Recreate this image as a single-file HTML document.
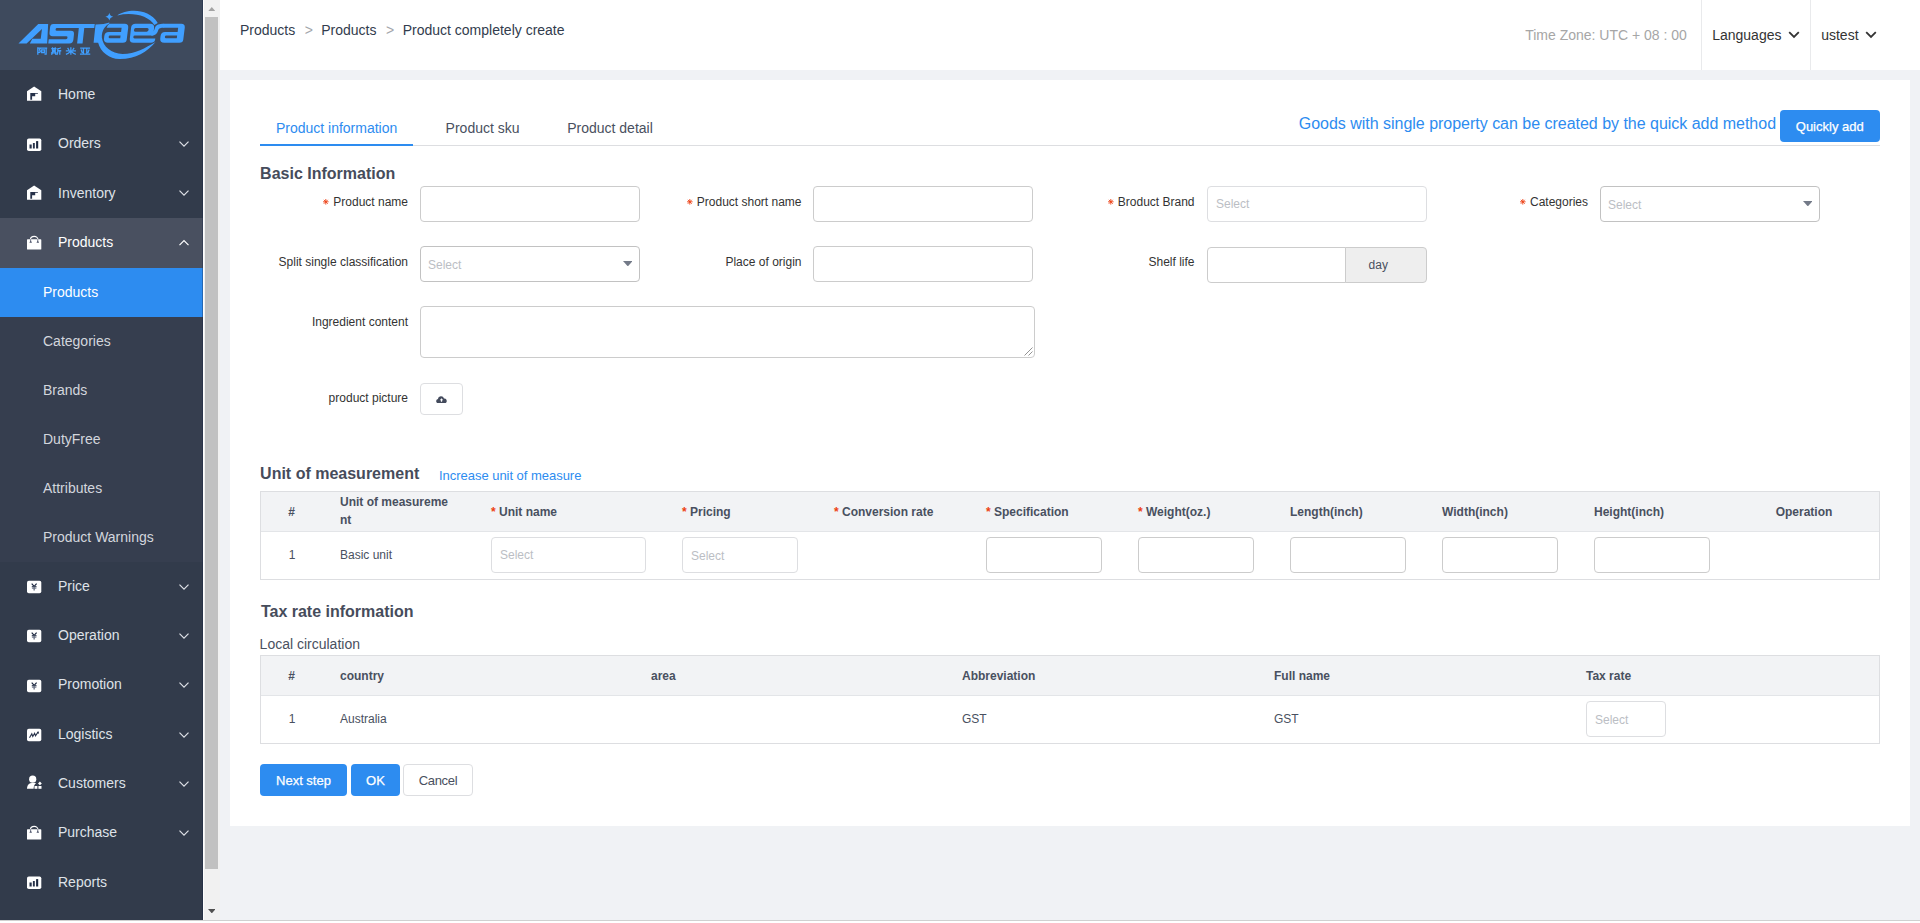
<!DOCTYPE html>
<html>
<head>
<meta charset="utf-8">
<title>Product completely create</title>
<style>
*{box-sizing:border-box;}
html,body{margin:0;padding:0;}
body{width:1920px;height:923px;overflow:hidden;background:#fff;font-family:"Liberation Sans",sans-serif;font-size:12px;color:#495060;position:relative;}
.abs{position:absolute;}
/* ---------- sidebar ---------- */
#side{position:absolute;left:0;top:0;width:203px;height:920px;background:#323b4b;overflow:hidden;}
#logo{position:absolute;left:0;top:0;width:203px;height:70px;background:#3e4a5d;}
.mi{position:absolute;left:0;width:203px;height:49.333px;color:#dfe2e8;font-size:14px;line-height:49.333px;white-space:nowrap;}
.mi .t{position:absolute;left:58px;top:0;}
.mi svg.ic{position:absolute;left:26.8px;top:16px;width:16px;height:18px;overflow:visible;}
.mi svg.ar{position:absolute;left:177.8px;top:20.8px;width:12px;height:8px;overflow:visible;}
.sub{position:absolute;left:0;width:203px;height:49.25px;background:#363e4f;color:#d3d6dd;font-size:14px;line-height:49.25px;}
.sub .t{position:absolute;left:43px;top:0;}
.sub.on{background:#2d8cf0;color:#fff;}
/* ---------- scrollbar ---------- */
#sb{position:absolute;left:203px;top:0;width:17px;height:920px;background:#f1f1f1;border-left:1px solid #fdfdfd;}
#sb .th{position:absolute;left:1px;top:17px;width:13px;height:851.7px;background:#c1c1c1;}
/* ---------- main ---------- */
#main{position:absolute;left:220px;top:0;width:1700px;height:920px;background:#f0f2f5;}
#hdr{position:absolute;left:0;top:0;width:1700px;height:70px;background:#fff;}
#card{position:absolute;left:10px;top:80px;width:1680px;height:746px;background:#fff;}
.tx{position:absolute;white-space:nowrap;line-height:20px;}
.lbl{position:absolute;white-space:nowrap;font-size:12px;line-height:20px;color:#333;}
.lbl svg.ast{display:inline-block;width:5.6px;height:5.6px;margin-right:4.6px;vertical-align:0.8px;overflow:visible;}
.ph{position:absolute;left:7px;top:0;line-height:34px;font-size:12px;color:#bbbec4;}
#ov{position:absolute;left:0;top:0;width:1920px;height:923px;}
.inp{position:absolute;height:36px;border:1px solid #ccc;border-radius:4px;background:#fff;}
.sel{position:absolute;height:36px;border:1px solid #dddee1;border-radius:4px;background:#fff;}
.sel span{position:absolute;left:8px;top:0;line-height:34px;font-size:12px;color:#bbbec4;}
.tri{position:absolute;width:0;height:0;border-left:4.75px solid transparent;border-right:4.75px solid transparent;border-top:5.5px solid #6b7280;}
.h2{position:absolute;font-size:16px;font-weight:bold;color:#464c5b;line-height:20px;white-space:nowrap;}
.tbl{position:absolute;left:40px;width:1620px;border:1px solid #dddee1;background:#fff;}
.tbl .hd{position:absolute;left:0;top:0;width:1618px;height:40px;background:#f2f3f5;border-bottom:1px solid #e3e5e8;}
.th{position:absolute;font-size:12px;font-weight:bold;color:#495060;line-height:18px;white-space:nowrap;}
.th i{font-style:normal;color:#ed3f14;margin-right:3.33px;}
.td{position:absolute;font-size:12px;color:#495060;line-height:18px;white-space:nowrap;}
.btn{position:absolute;height:32px;border-radius:4px;font-size:13px;line-height:32px;text-align:center;white-space:nowrap;}
.btn.p{background:#2d8cf0;color:#fff;line-height:34px;-webkit-text-stroke:0.25px #fff;}
.btn.d{background:#fff;color:#495060;border:1px solid #dddee1;line-height:32px;}
</style>
</head>
<body>
<svg width="0" height="0" style="position:absolute">
<defs>
<symbol id="i-house" viewBox="0 0 16 18">
  <path d="M0 5.2 L7.15 0.6 L14.3 5.2 V14.8 H0 Z" fill="#fff"/>
  <path d="M3.3 7 H10.9 V7.7 H8.2 V10.2 H5.1 V13.8 H3.3 Z" fill="#27324a"/>
</symbol>
<symbol id="i-bars" viewBox="0 0 16 18">
  <rect x="0" y="3.4" width="14.3" height="12.6" rx="1.8" fill="#fff"/>
  <rect x="2.5" y="9.5" width="2.2" height="4" fill="#27324a"/>
  <rect x="5.9" y="8" width="1.9" height="5.5" fill="#27324a"/>
  <rect x="9.1" y="6.1" width="2.1" height="7.4" fill="#1d2840"/>
</symbol>
<symbol id="i-bag" viewBox="0 0 16 18">
  <rect x="0" y="5.3" width="14.3" height="10.3" rx="0.6" fill="#fff"/>
  <path d="M3.5 5.6 A3.75 3.2 0 0 1 11 5.6" fill="none" stroke="#fff" stroke-width="1.1"/>
  <path d="M3.3 5.3 h0.8 v1.8 l0.9 1.6 h-2.6 l0.9 -1.6 z M10.4 5.3 h0.8 v1.8 l0.9 1.6 h-2.6 l0.9 -1.6 z" fill="#4b5268"/>
</symbol>
<symbol id="i-yen" viewBox="0 0 16 18">
  <rect x="0" y="2.8" width="14.3" height="12.4" rx="1.8" fill="#fff"/>
  <path d="M4.7 5.7 L7.15 8.4 L9.6 5.7" fill="none" stroke="#1d2840" stroke-width="1.2"/>
  <path d="M4.8 8.8 H9.5" stroke="#1d2840" stroke-width="1.2"/>
  <path d="M4.9 10.4 H9.4" stroke="#8c93a3" stroke-width="1"/>
  <path d="M7.15 8.5 V12.6" stroke="#6c7487" stroke-width="1.4"/>
</symbol>
<symbol id="i-zig" viewBox="0 0 16 18">
  <rect x="0" y="2.8" width="14.3" height="12.5" rx="1.8" fill="#fff"/>
  <path d="M2.5 11.7 L4.8 7.7 L5.8 10.5 L7.6 7.3 L8.5 9.9 L11.2 5.9" fill="none" stroke="#27324a" stroke-width="1.1"/>
  <path d="M11.6 5.2 L11.9 7.9 L9.9 6.4 Z" fill="#27324a"/>
</symbol>
<symbol id="i-ppl" viewBox="0 0 16 18"><g transform="translate(0,0.5)">
  <circle cx="5.7" cy="3.7" r="3.6" fill="#fff"/>
  <path d="M-0.1 13.3 C0.2 9.5 2 7.6 5 7.5 H9.2 C7.6 8.6 6.7 10.4 6.6 13.3 Z" fill="#fff"/>
  <path d="M12.9 6 L14.8 7.9 L12.9 9.8 L11 7.9 Z" fill="#fff"/>
  <rect x="7.5" y="10.5" width="2.9" height="2.8" fill="#fff"/>
  <rect x="11.4" y="10.5" width="3.1" height="2.8" fill="#fff"/>
</g></symbol>
<symbol id="i-down" viewBox="0 0 12 8">
  <path d="M1.5 1.7 L6 6.2 L10.5 1.7" fill="none" stroke="currentColor" stroke-width="1.2"/>
</symbol>
<symbol id="i-up" viewBox="0 0 12 8">
  <path d="M1.5 6.2 L6 1.7 L10.5 6.2" fill="none" stroke="currentColor" stroke-width="1.2"/>
</symbol>
</defs>
</svg>
<div id="side">
<div id="logo">
<svg style="position:absolute;left:15px;top:15px" width="95" height="35" viewBox="0 0 1920 707">
<g fill="#409fff">
  <path d="M70 575 L470 180 H670 L650 575 H300 L350 480 H520 L545 285 L235 575 Z"/>
  <path d="M775 180 H1300 V265 H850 Q822 265 820 292 Q818 320 846 320 H1130 Q1200 320 1192 390 L1180 500 Q1172 575 1100 575 H672 L682 490 H1030 Q1058 490 1061 460 Q1064 430 1036 430 H760 Q690 430 697 360 L708 250 Q715 180 775 180 Z"/>
  <path d="M1200 180 H1612 L1602 265 H1400 L1365 575 H1255 L1290 265 H1200 Z"/>
</g>
</svg>
<svg style="position:absolute;left:90px;top:5px" width="100" height="60" viewBox="0 0 1538 923">
<g fill="#409fff" fill-rule="evenodd">
  <!-- r + lower crescent -->
  <path d="M297 268 C250 285 180 298 85 300 L55 580 L125 580 C160 720 300 830 450 832 C700 835 880 720 1008 568 C850 660 700 750 500 752 C330 750 200 640 182 500 C178 400 230 320 297 286 Z"/>
  <!-- upper crescent -->
  <path d="M420 160 C560 62 900 40 1042 276 L990 308 C900 160 650 104 420 160 Z"/>
  <!-- star -->
  <path d="M297 120 Q306 171 358 180 Q306 189 297 240 Q288 189 236 180 Q288 171 297 120Z"/>
  <!-- a1 -->
  <path d="M300 290 H535 Q592 290 588 345 L565 530 Q560 580 505 580 H275 Q210 580 215 520 L220 475 Q228 415 290 415 H478 L486 350 H255 Q272 310 300 290 Z M305 470 H470 L465 512 H300 Q284 512 287 490 Q290 470 305 470 Z"/>
  <!-- e -->
  <path d="M700 290 H925 Q992 290 986 350 L972 470 H690 Q668 470 666 492 Q664 515 686 515 H1005 L1000 540 Q990 580 940 580 H670 Q605 580 612 520 L632 345 Q640 290 700 290 Z M702 355 H880 Q905 355 902 382 Q898 410 873 410 H694 Q672 410 676 384 Q680 355 702 355 Z"/>
  <!-- link e -> a2 -->
  <path d="M940 470 C1010 470 1030 440 1045 400 C1060 350 1090 350 1140 350 L1140 290 C1060 290 1020 300 1000 350 C985 400 975 410 940 410 Z"/>
  <!-- a2 -->
  <path d="M1130 290 H1405 Q1462 290 1458 345 L1435 530 Q1430 580 1375 580 H1140 Q1075 580 1080 520 L1085 475 Q1093 415 1155 415 H1348 L1356 350 H1130 Z M1170 470 H1340 L1335 512 H1165 Q1149 512 1152 490 Q1155 470 1170 470 Z"/>
</g>
</svg>
<svg style="position:absolute;left:10px;top:5px" width="190" height="60" viewBox="0 0 1920 606">
<!-- chinese glyph approximations -->
<g fill="none" stroke="#409fff" stroke-width="13">
  <path d="M281 428 V502 M281 435 H308 L297 454 Q314 464 300 478 H284 M314 436 H376 M365 436 V497 H348 M320 453 H347 V480 H320 Z"/>
  <path d="M417 441 H470 M430 428 V482 M457 428 V482 M430 456 H457 M430 469 H457 M414 483 H472 M428 488 L419 503 M457 488 L466 503 M514 431 Q500 440 481 442 M483 440 V472 Q483 492 473 503 M483 462 H518 M503 462 V503"/>
  <path d="M615 428 V503 M564 464 H666 M582 434 L597 455 M648 434 L633 455 M610 469 Q592 490 565 499 M620 469 Q638 490 665 499"/>
  <path d="M709 436 H809 M707 497 H811 M742 436 V497 M776 436 V497 M719 450 L731 484 M799 450 L787 484"/>
</g>
</svg>
</div>
<div id="menu">
<div class="mi" style="top:70.0px"><svg class="ic" viewBox="0 0 16 18"><use href="#i-house"/></svg><span class="t">Home</span></div>
<div class="mi" style="top:119.33px"><svg class="ic" viewBox="0 0 16 18"><use href="#i-bars"/></svg><span class="t">Orders</span><svg class="ar" viewBox="0 0 12 8"><use href="#i-down"/></svg></div>
<div class="mi" style="top:168.67px"><svg class="ic" style="top:16.37px" viewBox="0 0 16 18"><use href="#i-house"/></svg><span class="t">Inventory</span><svg class="ar" viewBox="0 0 12 8"><use href="#i-down"/></svg></div>
<div class="mi" style="top:218.0px;height:50px;background:#495060;color:#fff"><svg class="ic" viewBox="0 0 16 18"><use href="#i-bag"/></svg><span class="t">Products</span><svg class="ar" viewBox="0 0 12 8"><use href="#i-up"/></svg></div>
<div class="sub on" style="top:268.0px;height:49.0px;line-height:49.0px"><span class="t">Products</span></div>
<div class="sub" style="top:317.0px;height:49.0px;line-height:49.0px"><span class="t">Categories</span></div>
<div class="sub" style="top:366.0px;height:49.0px;line-height:49.0px"><span class="t">Brands</span></div>
<div class="sub" style="top:415.0px;height:49.0px;line-height:49.0px"><span class="t">DutyFree</span></div>
<div class="sub" style="top:464.0px;height:49.0px;line-height:49.0px"><span class="t">Attributes</span></div>
<div class="sub" style="top:513.0px;height:49.0px;line-height:49.0px"><span class="t">Product Warnings</span></div>
<div class="mi" style="top:562px"><svg class="ic" viewBox="0 0 16 18"><use href="#i-yen"/></svg><span class="t">Price</span><svg class="ar" viewBox="0 0 12 8"><use href="#i-down"/></svg></div>
<div class="mi" style="top:611px"><svg class="ic" viewBox="0 0 16 18"><use href="#i-yen"/></svg><span class="t">Operation</span><svg class="ar" viewBox="0 0 12 8"><use href="#i-down"/></svg></div>
<div class="mi" style="top:660px"><svg class="ic" style="top:17.0px" viewBox="0 0 16 18"><use href="#i-yen"/></svg><span class="t">Promotion</span><svg class="ar" viewBox="0 0 12 8"><use href="#i-down"/></svg></div>
<div class="mi" style="top:710px"><svg class="ic" viewBox="0 0 16 18"><use href="#i-zig"/></svg><span class="t">Logistics</span><svg class="ar" viewBox="0 0 12 8"><use href="#i-down"/></svg></div>
<div class="mi" style="top:759px"><svg class="ic" viewBox="0 0 16 18"><use href="#i-ppl"/></svg><span class="t">Customers</span><svg class="ar" viewBox="0 0 12 8"><use href="#i-down"/></svg></div>
<div class="mi" style="top:808px"><svg class="ic" viewBox="0 0 16 18"><use href="#i-bag"/></svg><span class="t">Purchase</span><svg class="ar" viewBox="0 0 12 8"><use href="#i-down"/></svg></div>
<div class="mi" style="top:858px"><svg class="ic" style="top:15.35px" viewBox="0 0 16 18"><use href="#i-bars"/></svg><span class="t">Reports</span></div>
</div>
</div>
<div class="abs" style="left:202px;top:0;width:1px;height:920px;background:rgba(20,35,65,0.35)"></div>
<div id="sb"><div class="th"></div>
<svg class="abs" style="left:3.8px;top:6.6px;width:7.6px;height:4.4px" viewBox="0 0 7.6 4.4"><path d="M0 4.4 L3.8 0 L7.6 4.4 Z" fill="#a3a3a3"/></svg>
<svg class="abs" style="left:3.8px;top:908.6px;width:7.6px;height:4.4px" viewBox="0 0 7.6 4.4"><path d="M0 0 L3.8 4.4 L7.6 0 Z" fill="#505050"/></svg>
</div>
<div id="main"></div>
<div id="ov">
<div class="abs" style="left:220px;top:0;width:1700px;height:70px;background:#fff"></div>
<div class="tx" style="left:240.0px;top:20.2px;font-size:14px;color:#323c4d;">Products</div>
<div class="tx" style="left:304.7px;top:20.2px;font-size:14px;color:#a3a6ab;">&gt;</div>
<div class="tx" style="left:321.2px;top:20.2px;font-size:14px;color:#323c4d;">Products</div>
<div class="tx" style="left:386.0px;top:20.2px;font-size:14px;color:#a3a6ab;">&gt;</div>
<div class="tx" style="left:402.7px;top:20.2px;font-size:14px;color:#323c4d;">Product completely create</div>
<div class="tx" style="left:1525.2px;top:25.2px;font-size:14px;color:#a6a6a6;">Time Zone: UTC + 08 : 00</div>
<div class="abs" style="left:1701px;top:0;width:1px;height:70px;background:#e9eaec"></div>
<div class="abs" style="left:1810px;top:0;width:1px;height:70px;background:#e9eaec"></div>
<div class="tx" style="left:1712.2px;top:25.2px;font-size:14px;color:#333;">Languages</div>
<div class="tx" style="left:1821.2px;top:25.2px;font-size:14px;color:#333;">ustest</div>
<svg class="abs" style="left:1788px;top:30px;width:12px;height:10px" viewBox="0 0 12 10"><path d="M1.2 2.2 L6 7 L10.8 2.2" fill="none" stroke="#333" stroke-width="1.8"/></svg>
<svg class="abs" style="left:1865px;top:30px;width:12px;height:10px" viewBox="0 0 12 10"><path d="M1.2 2.2 L6 7 L10.8 2.2" fill="none" stroke="#333" stroke-width="1.8"/></svg>
<div class="abs" style="left:230px;top:80px;width:1680px;height:746px;background:#fff"></div>
<div class="abs" style="left:260px;top:145px;width:1620px;height:1px;background:#dddee1"></div>
<div class="abs" style="left:260px;top:144px;width:153px;height:2px;background:#2d8cf0"></div>
<div class="tx" style="left:275.9px;top:117.6px;font-size:14px;color:#2d8cf0;">Product information</div>
<div class="tx" style="left:445.6px;top:117.6px;font-size:14px;color:#495060;">Product sku</div>
<div class="tx" style="left:567.2px;top:117.6px;font-size:14px;color:#495060;">Product detail</div>
<div class="tx" style="left:1298.8px;top:112.5px;font-size:16px;color:#2d8cf0;line-height:22px;letter-spacing:-0.02px;">Goods with single property can be created by the quick add method</div>
<div class="btn p" style="left:1780px;top:110px;width:99.5px">Quickly add</div>
<div class="h2" style="left:260.1px;top:164.2px">Basic Information</div>
<div class="lbl" style="right:1512px;top:191.5px"><svg class="ast" viewBox="0 0 6 6"><path d="M3 0V6M0 3H6M0.9 0.9L5.1 5.1M5.1 0.9L0.9 5.1" stroke="#ed3f14" stroke-width="0.95" fill="none"/></svg>Product name</div>
<div class="inp" style="left:420px;top:186px;width:220px"></div>
<div class="lbl" style="right:1118.5px;top:191.5px"><svg class="ast" viewBox="0 0 6 6"><path d="M3 0V6M0 3H6M0.9 0.9L5.1 5.1M5.1 0.9L0.9 5.1" stroke="#ed3f14" stroke-width="0.95" fill="none"/></svg>Product short name</div>
<div class="inp" style="left:813px;top:186px;width:220px"></div>
<div class="lbl" style="right:725.5px;top:191.5px"><svg class="ast" viewBox="0 0 6 6"><path d="M3 0V6M0 3H6M0.9 0.9L5.1 5.1M5.1 0.9L0.9 5.1" stroke="#ed3f14" stroke-width="0.95" fill="none"/></svg>Broduct Brand</div>
<div class="sel" style="left:1207px;top:186px;width:220px"><span>Select</span></div>
<div class="lbl" style="right:332px;top:191.5px"><svg class="ast" viewBox="0 0 6 6"><path d="M3 0V6M0 3H6M0.9 0.9L5.1 5.1M5.1 0.9L0.9 5.1" stroke="#ed3f14" stroke-width="0.95" fill="none"/></svg>Categories</div>
<div class="inp" style="left:1600px;top:186px;width:220px;border-color:#c2c2c2"><span class="ph" style="top:1px">Select</span><svg class="abs" style="left:201.8px;top:13.9px;width:9.7px;height:5.4px" viewBox="0 0 9.7 5.4"><path d="M0 0H9.7L4.85 5.4Z" fill="#737a88"/></svg></div>
<div class="lbl" style="right:1512px;top:251.5px">Split single classification</div>
<div class="inp" style="left:420px;top:246px;width:220px;border-color:#c2c2c2"><span class="ph" style="top:1px">Select</span><svg class="abs" style="left:201.8px;top:13.9px;width:9.7px;height:5.4px" viewBox="0 0 9.7 5.4"><path d="M0 0H9.7L4.85 5.4Z" fill="#737a88"/></svg></div>
<div class="lbl" style="right:1118.5px;top:251.5px">Place of origin</div>
<div class="inp" style="left:813px;top:246px;width:220px"></div>
<div class="lbl" style="right:725.5px;top:251.5px">Shelf life</div>
<div class="inp" style="left:1207px;top:247px;width:139px;border-radius:4px 0 0 4px"></div>
<div class="abs" style="left:1345px;top:247px;width:82px;height:36px;border:1px solid #ccc;border-radius:0 4px 4px 0;background:#eee;font-size:12px;color:#495060;line-height:34px;padding-left:22.6px">day</div>
<div class="lbl" style="right:1512px;top:311.5px">Ingredient content</div>
<div class="inp" style="left:420px;top:306px;width:615px;height:52px"><svg class="abs" style="right:1px;bottom:1px;width:9px;height:9px" viewBox="0 0 9 9"><path d="M8.5 0.5L0.5 8.5M8.5 4.5L4.5 8.5" stroke="#777" stroke-width="0.8"/></svg></div>
<div class="lbl" style="right:1512px;top:388.0px">product picture</div>
<div class="sel" style="left:420px;top:383px;width:43px;height:32px"><svg class="abs" style="left:15.1px;top:11.6px;width:11px;height:7.3px" viewBox="0 0 11 7.3"><path d="M2.3 7.3 A2.2 2.2 0 0 1 1.9 2.95 A3.1 3.1 0 0 1 8 2.6 A2.35 2.35 0 0 1 8.7 7.3 Z" fill="#434a5c"/><path d="M5.5 2.2 L7.2 4.2 H6.1 V5.7 H4.9 V4.2 H3.8 Z" fill="#fff"/></svg></div>
<div class="h2" style="left:260.1px;top:463.7px">Unit of measurement</div>
<div class="tx" style="left:439.0px;top:465.6px;font-size:13px;color:#2d8cf0;letter-spacing:-0.03px;">Increase unit of measure</div>
<div class="tbl" style="left:260px;top:491px;height:89px"><div class="hd"></div></div>
<div class="th" style="left:288.2px;top:503px;">#</div>
<div class="th" style="left:340px;top:493.3px;">Unit of measureme<br>nt</div>
<div class="th" style="left:491px;top:503px;"><i>*</i>Unit name</div>
<div class="th" style="left:682px;top:503px;"><i>*</i>Pricing</div>
<div class="th" style="left:834px;top:503px;"><i>*</i>Conversion rate</div>
<div class="th" style="left:986px;top:503px;"><i>*</i>Specification</div>
<div class="th" style="left:1138px;top:503px;"><i>*</i>Weight(oz.)</div>
<div class="th" style="left:1290px;top:503px;">Length(inch)</div>
<div class="th" style="left:1442px;top:503px;">Width(inch)</div>
<div class="th" style="left:1594px;top:503px;">Height(inch)</div>
<div class="th" style="left:1728px;top:503px;width:152px;text-align:center;">Operation</div>
<div class="td" style="left:288.7px;top:546px;">1</div>
<div class="td" style="left:340px;top:546px;">Basic unit</div>
<div class="sel" style="left:491px;top:537px;width:155px"><span>Select</span></div>
<div class="sel" style="left:682px;top:537px;width:116px"><span style="top:1px">Select</span></div>
<div class="inp" style="left:986px;top:537px;width:116px"></div>
<div class="inp" style="left:1138px;top:537px;width:116px"></div>
<div class="inp" style="left:1290px;top:537px;width:116px"></div>
<div class="inp" style="left:1442px;top:537px;width:116px"></div>
<div class="inp" style="left:1594px;top:537px;width:116px"></div>
<div class="h2" style="left:260.9px;top:601.5px">Tax rate information</div>
<div class="tx" style="left:259.6px;top:634.2px;font-size:14px;color:#495060">Local circulation</div>
<div class="tbl" style="left:260px;top:655px;height:89px"><div class="hd"></div></div>
<div class="th" style="left:288.2px;top:667px;">#</div>
<div class="th" style="left:340px;top:667px;">country</div>
<div class="th" style="left:651px;top:667px;">area</div>
<div class="th" style="left:962px;top:667px;">Abbreviation</div>
<div class="th" style="left:1274px;top:667px;">Full name</div>
<div class="th" style="left:1586px;top:667px;">Tax rate</div>
<div class="td" style="left:288.7px;top:709.5px;">1</div>
<div class="td" style="left:340px;top:709.5px;">Australia</div>
<div class="td" style="left:962px;top:709.5px;">GST</div>
<div class="td" style="left:1274px;top:709.5px;">GST</div>
<div class="sel" style="left:1586px;top:701px;width:80px"><span style="top:1px">Select</span></div>
<div class="btn p" style="left:260px;top:764px;width:87px">Next step</div>
<div class="btn p" style="left:351px;top:764px;width:49px">OK</div>
<div class="btn d" style="left:403px;top:764px;width:70px;letter-spacing:-0.3px">Cancel</div>
<div class="abs" style="left:0;top:920px;width:1920px;height:3px;background:#fff;border-top:1px solid #d0d0d0"></div>
</div>
</body>
</html>
